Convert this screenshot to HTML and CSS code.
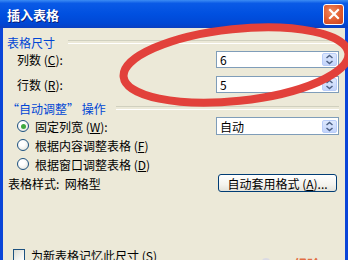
FILE: index.html
```html
<!DOCTYPE html>
<html lang="zh-CN">
<head>
    <meta charset="UTF-8">
    <title>插入表格</title>
    <link rel="stylesheet" href="styles.css">
</head>
<body>
    <div class="window">
        <div class="titlebar">
            <span class="title">插入表格</span>
            <span class="close-btn">
                <svg width="12" height="12" viewBox="0 0 12 12"><path d="M2 2 L10 10 M10 2 L2 10" stroke="#fff" stroke-width="2.2" stroke-linecap="square"/></svg>
            </span>
        </div>

        <div class="dialog-body">
            <div class="group-title">表格尺寸</div>

            <div class="row">
                <span class="label">列数 (<u>C</u>):</span>
                <div class="field">
                    <span class="value">6</span>
                    <span class="spin">
                        <svg width="9" height="11" viewBox="0 0 9 11"><path d="M1.5 4 L4.5 1.5 L7.5 4 M1.5 7 L4.5 9.5 L7.5 7" fill="none" stroke="#4d6185" stroke-width="1.5"/></svg>
                    </span>
                </div>
            </div>

            <div class="row row-gap">
                <span class="label">行数 (<u>R</u>):</span>
                <div class="field">
                    <span class="value">5</span>
                    <span class="spin">
                        <svg width="9" height="11" viewBox="0 0 9 11"><path d="M1.5 4 L4.5 1.5 L7.5 4 M1.5 7 L4.5 9.5 L7.5 7" fill="none" stroke="#4d6185" stroke-width="1.5"/></svg>
                    </span>
                </div>
            </div>

            <div class="group-title group-second">“自动调整” 操作</div>

            <div class="row radio-row">
                <span class="option"><span class="radio checked"></span>固定列宽 (<u>W</u>):</span>
                <div class="field field-tall">
                    <span class="value">自动</span>
                    <span class="spin">
                        <svg width="9" height="11" viewBox="0 0 9 11"><path d="M1.5 4 L4.5 1.5 L7.5 4 M1.5 7 L4.5 9.5 L7.5 7" fill="none" stroke="#4d6185" stroke-width="1.5"/></svg>
                    </span>
                </div>
            </div>
            <div class="row radio-row">
                <span class="option"><span class="radio"></span>根据内容调整表格 (<u>F</u>)</span>
            </div>
            <div class="row radio-row">
                <span class="option"><span class="radio"></span>根据窗口调整表格 (<u>D</u>)</span>
            </div>

            <div class="row radio-row">
                <span class="style-label">表格样式:&nbsp; 网格型</span>
                <button class="xp-btn">自动套用格式 (<u>A</u>)...</button>
            </div>

            <div class="row check-row">
                <span class="checkbox"></span>
                <span>为新表格记忆此尺寸 (S)</span>
            </div>
        </div>
    </div>

    <!-- red circle drawn on top of the screenshot -->
    <svg class="mark" width="348" height="260" viewBox="0 0 348 260">
        <ellipse cx="236" cy="65" rx="113" ry="36" transform="rotate(-6 236 65)" fill="none" stroke="#e2413b" stroke-width="8"/>
    </svg>

    <div class="watermark">
        <span class="paw"></span><span class="wm-bai">Bai</span><span class="wm-jing">经验</span>
    </div>
</body>
</html>
```

FILE: styles.css
```css
* {
    margin: 0;
    padding: 0;
    box-sizing: border-box;
}

body {
    width: 348px;
    height: 260px;
    overflow: hidden;
    position: relative;
    font-family: "Noto Sans CJK SC", "DejaVu Sans", sans-serif;
    font-size: 12px;
    color: #000;
    background: #ece9d8;
}

u {
    text-decoration: underline;
}

.window {
    width: 348px;
    height: 260px;
    display: flex;
    flex-direction: column;
}

.titlebar {
    height: 28px;
    flex-shrink: 0;
    display: flex;
    align-items: center;
    justify-content: space-between;
    padding: 0 4px 0 7px;
    background: linear-gradient(to bottom, #3c8cf4 0%, #0a5ae6 12%, #0050e0 50%, #0047d4 85%, #0a3fc0 100%);
}

.title {
    color: #fff;
    font-weight: bold;
    font-size: 13px;
    text-shadow: 1px 1px 0 #0a1e78;
}

.close-btn {
    width: 21px;
    height: 21px;
    border: 1px solid #fff;
    border-radius: 3px;
    background: radial-gradient(circle at 40% 35%, #f08a60 0%, #e05a2e 55%, #c8421e 100%);
    display: flex;
    align-items: center;
    justify-content: center;
}

.dialog-body {
    flex: 1;
    background: #ece9d8;
    border-left: 3px solid #0a45d8;
    border-right: 3px solid #0a45d8;
    padding: 6px 6px 0 4px;
}

.group-title {
    height: 16px;
    display: flex;
    align-items: center;
    color: #0046d5;
    white-space: nowrap;
}

.group-title::after {
    content: "";
    flex: 1;
    height: 2px;
    margin-left: 13px;
    border-top: 1px solid #d0d0bf;
    border-bottom: 1px solid #fff;
}

.group-second {
    margin-top: 7px;
}

.group-second::after {
    margin-left: 10px;
}

.row {
    display: flex;
    align-items: center;
    justify-content: space-between;
    height: 17px;
    margin-top: 1px;
}

.row-gap {
    margin-top: 8px;
}

.label {
    margin-left: 10px;
}

.field {
    width: 123px;
    height: 17px;
    border: 1px solid #7f9db9;
    background: #fff;
    display: flex;
    align-items: center;
    justify-content: space-between;
    padding: 0 1px 0 3px;
}

.field-tall {
    height: 18px;
}

.spin {
    width: 15px;
    height: 13px;
    border-radius: 2px;
    background: linear-gradient(to bottom, #dde8fd, #c3d4fb);
    border: 1px solid #b9cdf9;
    display: flex;
    align-items: center;
    justify-content: center;
}

.radio-row {
    height: 18px;
}

.option {
    display: flex;
    align-items: center;
    margin-left: 10px;
}

.radio {
    width: 12px;
    height: 12px;
    border-radius: 50%;
    border: 1px solid #1c5180;
    background: radial-gradient(circle at 40% 35%, #fff 30%, #dcdcd2 100%);
    margin-right: 6px;
    display: flex;
    align-items: center;
    justify-content: center;
}

.radio.checked::after {
    content: "";
    width: 5px;
    height: 5px;
    border-radius: 50%;
    background: #3fa93f;
}

.style-label {
    margin-left: 1px;
}

.xp-btn {
    width: 119px;
    height: 18px;
    margin-right: 2px;
    border: 1px solid #003c74;
    border-radius: 3px;
    background: linear-gradient(to bottom, #fff, #f4f3ee 60%, #e3e2da);
    font-family: inherit;
    font-size: 12px;
    color: #000;
}

.check-row {
    justify-content: flex-start;
    height: 16px;
    margin-top: 55px;
}

.checkbox {
    width: 12px;
    height: 12px;
    border: 1px solid #1c5180;
    background: linear-gradient(135deg, #dcdcd2, #fff);
    margin: 0 6px 0 6px;
}

.mark {
    position: absolute;
    left: 0;
    top: 0;
}

.watermark {
    position: absolute;
    left: 262px;
    top: 248px;
    display: flex;
    align-items: flex-end;
    font-size: 13px;
    font-weight: bold;
    opacity: 0.85;
}

.paw {
    width: 8px;
    height: 6px;
    border-radius: 50%;
    background: #d8d8e6;
    margin-right: -4px;
    margin-bottom: 9px;
}

.wm-bai {
    color: #2a3a8c;
    font-family: "Liberation Sans", sans-serif;
    margin-top: 6px;
}

.wm-jing {
    color: #e0582a;
    margin-left: 8px;
    margin-top: 6px;
}
```
